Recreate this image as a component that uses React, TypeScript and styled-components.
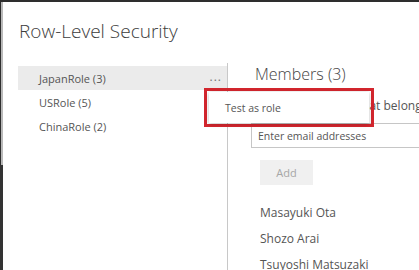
import React from 'react';
import styled, { createGlobalStyle } from 'styled-components';

const GlobalStyle = createGlobalStyle`
    html, body {
        margin: 0;
        padding: 0;
        background: #ffffff;
        overflow: hidden;
    }
    body {
        font-family: "Open Sans", "Noto Sans", "Liberation Sans", sans-serif;
    }
`;

interface IRole {
    name: string;
    count: number;
}

const roles: IRole[] = [
    { name: 'JapanRole', count: 3 },
    { name: 'USRole', count: 5 },
    { name: 'ChinaRole', count: 2 },
];

const members = ['Masayuki Ota', 'Shozo Arai', 'Tsuyoshi Matsuzaki'];

export default function App() {
    return (
        <React.Fragment>
            <GlobalStyle />
            <Screen>
                <Rail>
                    <RailTop />
                    <RailBottom />
                </Rail>
                <Dialog>
                    <Title>Row-Level Security</Title>
                    <Body>
                        <Sidebar>
                            {roles.map((role, i) => (
                                <RoleRow key={role.name} selected={i === 0}>
                                    <span>{role.name} ({role.count})</span>
                                    {i === 0 && <More>...</More>}
                                </RoleRow>
                            ))}
                        </Sidebar>
                        <Main>
                            <Heading>Members (3)</Heading>
                            <Hint>People or groups that belong to this role</Hint>
                            <EmailInput placeholder="Enter email addresses" />
                            <AddButton>Add</AddButton>
                            <MemberList>
                                {members.map((m) => (
                                    <Member key={m}>{m}</Member>
                                ))}
                            </MemberList>
                        </Main>
                        <Callout>
                            <Menu>
                                <MenuItem>Test as role</MenuItem>
                            </Menu>
                        </Callout>
                    </Body>
                </Dialog>
            </Screen>
        </React.Fragment>
    );
}

const Screen = styled.div`
    display: flex;
    width: 419px;
    height: 270px;
    border-top: 2px solid #2e2e2e;
    box-sizing: border-box;
    overflow: hidden;
`;

const Rail = styled.div`
    display: flex;
    flex-direction: column;
    width: 3px;
    flex-shrink: 0;
`;

const RailTop = styled.div`
    height: 163px;
    width: 1px;
    background: #2e2e2e;
    border-right: 2px solid #b9b9b9;
`;

const RailBottom = styled.div`
    flex: 1;
    background: #333333;
`;

const Dialog = styled.div`
    flex: 1;
    display: flex;
    flex-direction: column;
`;

const Title = styled.h1`
    margin: 0;
    padding: 14px 0 0 16px;
    height: 30px;
    font-size: 19px;
    font-weight: 300;
    color: #3c3c3c;
    line-height: 30px;
`;

const Body = styled.div`
    position: relative;
    flex: 1;
    display: flex;
`;

const Sidebar = styled.div`
    width: 209px;
    padding: 20px 0 0 15px;
    flex-shrink: 0;
`;

const RoleRow = styled.div<{ selected?: boolean }>`
    display: flex;
    align-items: center;
    justify-content: space-between;
    height: 24px;
    padding: 0 5px 0 21px;
    background: ${({ selected }) => (selected ? '#ebebeb' : 'transparent')};
    font-size: 11px;
    color: #555555;
`;

const More = styled.span`
    color: #777777;
    font-size: 12px;
    letter-spacing: 1px;
    padding-bottom: 4px;
`;

const Main = styled.div`
    flex: 1;
    border-left: 1px solid #c8c8c8;
    padding-left: 23px;
    margin-top: 17px;
`;

const Heading = styled.h2`
    margin: 0 0 0 4px;
    font-size: 16px;
    font-weight: 300;
    color: #444444;
    line-height: 22px;
`;

const Hint = styled.div`
    margin: 12px 0 0 8px;
    font-size: 12px;
    color: #555555;
    white-space: nowrap;
    line-height: 18px;
`;

const EmailInput = styled.input`
    display: block;
    margin-top: 8px;
    width: 200px;
    height: 25px;
    box-sizing: border-box;
    padding: 0 6px;
    border: 1px solid #c6c6c6;
    font-family: inherit;
    font-size: 10.5px;
    color: #444444;
    &::placeholder {
        color: #555555;
    }
`;

const AddButton = styled.button`
    display: block;
    margin: 12px 0 0 9px;
    width: 53px;
    height: 25px;
    border: none;
    background: #f0f0f0;
    color: #a6a6a6;
    font-family: inherit;
    font-size: 11px;
`;

const MemberList = styled.div`
    margin: 18px 0 0 9px;
    display: flex;
    flex-direction: column;
    gap: 6px;
`;

const Member = styled.div`
    font-size: 12px;
    color: #555555;
    line-height: 20px;
    white-space: nowrap;
`;

const Callout = styled.div`
    position: absolute;
    left: 201px;
    top: 42px;
    width: 164px;
    height: 33px;
    border: 3px solid #d3262e;
`;

const Menu = styled.div`
    margin: 1px 2px;
    height: 31px;
    background: #ffffff;
    box-shadow: 0 1px 4px rgba(0, 0, 0, 0.25);
    display: flex;
    align-items: center;
`;

const MenuItem = styled.div`
    padding-left: 16px;
    font-size: 10.5px;
    color: #555555;
`;
